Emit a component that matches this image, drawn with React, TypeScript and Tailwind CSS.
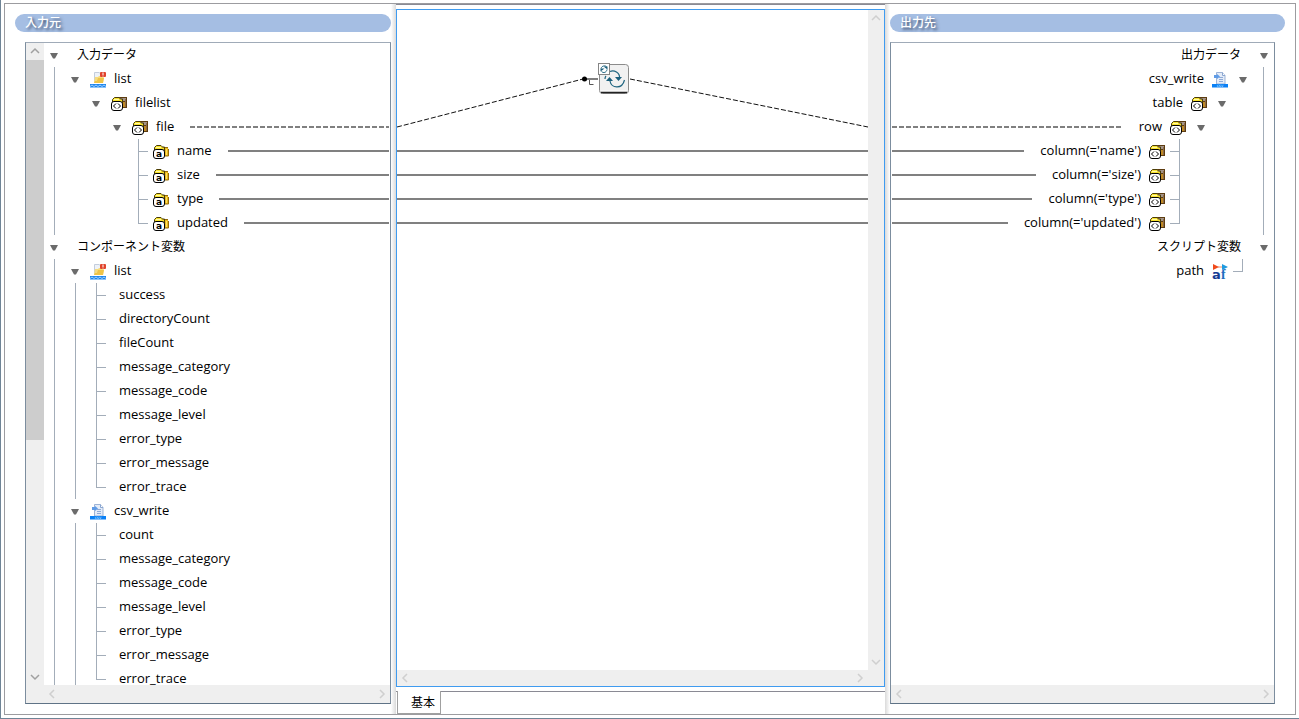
import type { ReactNode } from 'react';
import { clsx } from 'clsx';

type IconName = 'list' | 'csv' | 'xml' | 'attr' | 'var';
type Link = 'solid' | 'dashed';

// guides: one character per indent cell
//   "v" = open/close arrow, "|" = line, "+" = branch, "L" = last branch, "." = empty
interface TreeRow {
  guides: string;
  label: string;
  icon?: IconName;
  link?: Link;
}

const sourceRows: TreeRow[] = [
  { guides: 'v', label: '入力データ' },
  { guides: '|v', label: 'list', icon: 'list' },
  { guides: '|.v', label: 'filelist', icon: 'xml' },
  { guides: '|..v', label: 'file', icon: 'xml', link: 'dashed' },
  { guides: '|...+', label: 'name', icon: 'attr', link: 'solid' },
  { guides: '|...+', label: 'size', icon: 'attr', link: 'solid' },
  { guides: '|...+', label: 'type', icon: 'attr', link: 'solid' },
  { guides: '|...L', label: 'updated', icon: 'attr', link: 'solid' },
  { guides: 'v', label: 'コンポーネント変数' },
  { guides: '|v', label: 'list', icon: 'list' },
  { guides: '||+', label: 'success' },
  { guides: '||+', label: 'directoryCount' },
  { guides: '||+', label: 'fileCount' },
  { guides: '||+', label: 'message_category' },
  { guides: '||+', label: 'message_code' },
  { guides: '||+', label: 'message_level' },
  { guides: '||+', label: 'error_type' },
  { guides: '||+', label: 'error_message' },
  { guides: '||L', label: 'error_trace' },
  { guides: '|v', label: 'csv_write', icon: 'csv' },
  { guides: '||+', label: 'count' },
  { guides: '||+', label: 'message_category' },
  { guides: '||+', label: 'message_code' },
  { guides: '||+', label: 'message_level' },
  { guides: '||+', label: 'error_type' },
  { guides: '||+', label: 'error_message' },
  { guides: '||L', label: 'error_trace' },
];

const targetRows: TreeRow[] = [
  { guides: 'v', label: '出力データ' },
  { guides: '|v', label: 'csv_write', icon: 'csv' },
  { guides: '|.v', label: 'table', icon: 'xml' },
  { guides: '|..v', label: 'row', icon: 'xml', link: 'dashed' },
  { guides: '|...+', label: "column(='name')", icon: 'xml', link: 'solid' },
  { guides: '|...+', label: "column(='size')", icon: 'xml', link: 'solid' },
  { guides: '|...+', label: "column(='type')", icon: 'xml', link: 'solid' },
  { guides: '|...L', label: "column(='updated')", icon: 'xml', link: 'solid' },
  { guides: 'v', label: 'スクリプト変数' },
  { guides: '.L', label: 'path', icon: 'var' },
];

/** Folder with a small white tag in front */
function FolderIcon({ attr }: { attr?: boolean }) {
  return (
    <svg viewBox="0 0 16 16" className="size-4">
      {attr ? (
        <>
          <path d="M6 3h9v2h1v7H6z" fill="#e9b81c" />
          <path d="M9 3.5h6M15.500 5v7H12" fill="none" stroke="#946c0a" />
          <path d="M13.500 5v6" stroke="#fbe26a" />
        </>
      ) : (
        <>
          <path d="M6 1h10v11H6z" fill="#5d3c10" />
          <path d="M8 2h7v3H8z" fill="#a39389" />
          <path d="M11 6h3v5h-3z" fill="#c08a24" />
          <path d="M14.500 3v8" stroke="#8a6a4a" />
        </>
      )}
      <path d="M1.500 11V3.500l2-2H8l1.500 2h1.500V11z" fill="#f8e22c" />
      <path d="M1.500 7V3.500l2-2H8l1.500 1.500h2V7" fill="none" stroke="#4a3d08" />
      <path d="M3 3.500h5" stroke="#fff9a8" />
      <rect x=".5" y="5.500" width="11" height="9" rx="2.500" fill="#fff" stroke="#000" />
      {attr ? (
        <text x="6" y="13" textAnchor="middle" fontSize="9" fontWeight="700" fontFamily="DejaVu Sans">
          a
        </text>
      ) : (
        <path d="M5 7.500L2.500 10 5 12.500M7 7.500L9.500 10 7 12.500" fill="none" stroke="#000" />
      )}
    </svg>
  );
}

function FileListIcon() {
  return (
    <svg viewBox="0 0 16 16" className="size-4">
      <path d="M4.500.5H9L11 2v8H4.500z" fill="#eef2f8" stroke="#c3cddc" />
      <path d="M5 5h3l1-1h5l-1 7H4z" fill="#f7dc7c" />
      <path d="M8 6h6l-1 5H4l1-2h2z" fill="#efc448" />
      <rect x="10" y="0" width="6" height="5" rx="1" fill="#e0442c" />
      <path d="M13 .5v2.500M13 3.500v1" stroke="#fff" />
      <path d="M0 12h16v3.500H0z" fill="#1c86ee" />
      <path d="M0 14.500l2-1.500 2 1.500 2-1.500 2 1.500 2-1.500 2 1.500 2-1.500 2 1.500" fill="none" stroke="#bfe0ff" strokeWidth=".8" />
    </svg>
  );
}

function CsvIcon() {
  return (
    <svg viewBox="0 0 16 16" className="size-4">
      <path d="M4.500.5h6l2.500 3V12H4.500z" fill="#e4ecf8" stroke="#9db3d6" />
      <path d="M10.500.5v3H13" fill="#fff" stroke="#8aa6d0" />
      <path d="M7 5.500h4M7 7.500h4M7 9.500h4" stroke="#8faad6" />
      <path d="M2 3h3V2l3 2.500L5 7V6H2z" fill="#5f9be6" />
      <rect y="12" width="16" height="3.500" fill="#0a80f5" />
      <text x="8" y="15" textAnchor="middle" fontSize="4" fill="#cfe6ff" fontFamily="DejaVu Sans">
        csv
      </text>
    </svg>
  );
}

function VariableIcon() {
  return (
    <svg viewBox="0 0 16 16" className="size-4 overflow-visible">
      <text x="0" y="15" fontSize="13" fontWeight="700" fill="#143c94" fontFamily="DejaVu Sans">
        a
      </text>
      <text x="9" y="15" fontSize="14" fontWeight="700" fill="#1f6fc0" fontFamily="Liberation Serif">
        f
      </text>
      <path d="M1 0l6 3-6 3z" fill="#f04a1c" />
      <path d="M6 3h4" stroke="#f08a60" />
      <path d="M10 0l6 3-6 3z" fill="#1f9be0" />
    </svg>
  );
}

function NodeIcon({ name }: { name: IconName }) {
  if (name === 'list') return <FileListIcon />;
  if (name === 'csv') return <CsvIcon />;
  if (name === 'var') return <VariableIcon />;
  return <FolderIcon attr={name === 'attr'} />;
}

function Guide({ kind, mirrored }: { kind: string; mirrored?: boolean }) {
  if (kind === 'v') {
    return (
      <button
        type="button"
        aria-label="開閉"
        aria-expanded="true"
        className={clsx('flex h-6 w-[21px] items-center', mirrored ? 'justify-end pr-1.5' : 'pl-1.5')}
      >
        <svg viewBox="0 0 8 6" className="mt-0.5 h-1.5 w-2">
          <path d="M0 0h8L5 5.500H3z" fill="#6b6b6b" />
        </svg>
      </button>
    );
  }
  const line = mirrored ? 'border-r' : 'border-l';
  return (
    <span className={clsx('flex h-6 w-[21px] flex-col', mirrored ? 'pr-2.5' : 'pl-2.5')}>
      {kind !== '.' && (
        <>
          <span
            className={clsx('h-[13px] border-[#a3adb9]', line, kind !== '|' && 'border-b', mirrored ? 'ml-px' : 'mr-px')}
          />
          {kind !== 'L' && <span className={clsx('flex-1 border-[#a3adb9]', line, mirrored ? 'ml-px' : 'mr-px')} />}
        </>
      )}
    </span>
  );
}

function Tree({ rows, mirrored }: { rows: TreeRow[]; mirrored?: boolean }) {
  return (
    <ul className="min-w-0 flex-1 overflow-hidden">
      {rows.map((row, i) => (
        <li key={i} className={clsx('flex h-6 items-center', mirrored && 'flex-row-reverse')}>
          {row.guides.split('').map((kind, n) => (
            <Guide key={n} kind={kind} mirrored={mirrored} />
          ))}
          {row.icon && (
            <span className="mx-1 pt-0.5">
              <NodeIcon name={row.icon} />
            </span>
          )}
          <span
            className={clsx(
              'whitespace-nowrap',
              row.guides === 'v' ? 'text-[12px] leading-6' : 'pb-0.5 text-[13px] leading-[22px]',
              row.icon ? 'mx-1' : 'mx-3',
            )}
          >
            {row.label}
          </span>
          {row.link && (
            <span
              className={clsx(
                'h-0.5 flex-1',
                mirrored ? 'mr-3 ml-px' : 'mr-px ml-3',
                row.link === 'solid'
                  ? 'bg-[#808080]'
                  : 'bg-[repeating-linear-gradient(90deg,#808080_0_5px,transparent_5px_7px)]',
              )}
            />
          )}
        </li>
      ))}
    </ul>
  );
}

const chevrons = {
  up: 'M1 6l4-4 4 4',
  down: 'M1 3l4 4 4-4',
  left: 'M6 1L2 5l4 4',
  right: 'M3 1l4 4-4 4',
};

function ScrollButton({ dir, active }: { dir: keyof typeof chevrons; active?: boolean }) {
  return (
    <button type="button" aria-label={dir} className="flex size-[17px] shrink-0 items-center justify-center">
      <svg viewBox="0 0 10 10" className="size-2.5">
        <path d={chevrons[dir]} fill="none" stroke={active ? '#a0a0a0' : '#cfcfcf'} strokeWidth="1.5" />
      </svg>
    </button>
  );
}

function HorizontalScroll() {
  return (
    <div className="flex flex-1 items-center justify-between">
      <ScrollButton dir="left" />
      <ScrollButton dir="right" />
    </div>
  );
}

function PanelTitle({ children }: { children: ReactNode }) {
  return (
    <h2 className="h-[18px] rounded-full bg-[#a5bee3] px-2.5 text-[12px] leading-[17px] font-medium text-white [text-shadow:2px_2px_3px_#3c4a66]">
      {children}
    </h2>
  );
}

const treeBox = 'flex min-h-0 flex-1 flex-col border border-t-[#a0abb8] border-r-[#7c8d9e] border-b-[#5f7386] border-l-[#7c8d9e]';

function SourcePanel() {
  return (
    <section className="flex min-h-0 flex-col gap-2.5 py-2.5 pl-2.5">
      <PanelTitle>入力元</PanelTitle>
      <div className={clsx(treeBox, 'ml-2.5')}>
        <div className="flex min-h-0 flex-1">
          <div className="flex w-[18px] flex-col items-center bg-[#efefef]">
            <ScrollButton dir="up" active />
            <div className="w-full flex-[5] bg-[#cdcdcd]" />
            <div className="flex-[3]" />
            <ScrollButton dir="down" active />
          </div>
          <Tree rows={sourceRows} />
        </div>
        <div className="flex h-[18px] bg-[#efefef] pl-[18px]">
          <HorizontalScroll />
        </div>
      </div>
    </section>
  );
}

function TargetPanel() {
  return (
    <section className="flex min-h-0 flex-col gap-2.5 py-2.5 pr-2.5">
      <PanelTitle>出力先</PanelTitle>
      <div className={clsx(treeBox, 'mr-2.5')}>
        <div className="flex min-h-0 flex-1">
          <Tree rows={targetRows} mirrored />
        </div>
        <div className="flex h-[18px] bg-[#efefef]">
          <HorizontalScroll />
        </div>
      </div>
    </section>
  );
}

/** Loop node placed on the mapping canvas */
function LoopNode() {
  return (
    <button type="button" aria-label="繰り返し" className="absolute top-[53px] left-[201px] size-8">
      <svg viewBox="0 0 32 32" className="size-8">
        <rect x="1.500" y="1.500" width="29" height="29" rx="3" fill="#f1f1f1" stroke="#8b8b8b" />
        <path d="M3 28h26" stroke="#fff" />
        <path d="M3 29.500h26" stroke="#222" strokeWidth="1.500" />
        <g fill="none" stroke="#1f6580" strokeWidth="1.200">
          <path d="M12 8.500c4-2 10 1 9.500 6.500" />
          <path d="M7 16c0-1 0-2 1-3" />
          <path d="M12 18c1 7 12 9 14.500-1" />
        </g>
        <path d="M17 14h7l-3.500 4zM8 18h7l-3.500-4z" fill="#1a5f7c" />
        <rect x=".5" y=".5" width="11" height="11" fill="#fff" stroke="#858585" />
        <path d="M3 5.500c1-3 4-3 5.500-2M3.500 8.500c2 2 5 1 5.500-2" fill="none" stroke="#1f6580" />
        <path d="M5.500 3.500h4v3zM2.500 8.500v-3h4z" fill="#1a5f7c" />
      </svg>
    </button>
  );
}

function MappingCanvas() {
  return (
    <section className="flex min-h-0 flex-col border-t border-[#8a8a94] pt-1">
      <div className="flex min-h-0 flex-1 flex-col border border-[#3f9bf0]">
        <div className="flex min-h-0 flex-1">
          <div className="relative min-w-0 flex-1">
            <svg className="size-full">
              <line x1="0" y1="117" x2="186" y2="69" stroke="#111" strokeDasharray="5 2" />
              <line x1="233" y1="69" x2="100%" y2="117" stroke="#111" strokeDasharray="5 2" />
              {[141, 165, 189, 213].map((y) => (
                <line key={y} x1="0" y1={y} x2="100%" y2={y} stroke="#808080" strokeWidth="2" />
              ))}
              <line x1="188" y1="69" x2="201" y2="69" stroke="#808080" strokeWidth="2" />
              <circle cx="187.500" cy="69" r="2.500" />
              <path d="M192.500 70v4.500h4" fill="none" stroke="#555" />
            </svg>
            <LoopNode />
          </div>
          <div className="flex w-4 flex-col items-center justify-between bg-[#efefef]">
            <ScrollButton dir="up" />
            <ScrollButton dir="down" />
          </div>
        </div>
        <div className="flex h-4 bg-[#efefef] pr-4">
          <HorizontalScroll />
        </div>
      </div>
      <div role="tablist" className="mt-1 flex h-[23px]">
        <span className="w-px border-t border-[#8a8a94]" />
        <button
          type="button"
          role="tab"
          aria-selected="true"
          className="w-11 border-x border-b border-[#a0a0a0] pt-0.5 pl-2 text-[12px] leading-5"
        >
          基本
        </button>
        <span className="flex-1 border-t border-[#8a8a94]" />
      </div>
    </section>
  );
}

export default function App() {
  return (
    <main className="flex h-screen flex-col border-b border-l border-[#6f8496] bg-white p-[3px] font-['Open_Sans','Noto_Sans_CJK_JP',sans-serif] text-black">
      <div className="grid min-h-0 flex-1 grid-cols-[386px_5px_minmax(0,1fr)_5px_405px] grid-rows-[minmax(0,1fr)] border border-[#9c9ca0]">
        <SourcePanel />
        <div className="bg-linear-to-r from-white to-[#dadada]" />
        <MappingCanvas />
        <div className="bg-linear-to-r from-[#dadada] to-white" />
        <TargetPanel />
      </div>
    </main>
  );
}
